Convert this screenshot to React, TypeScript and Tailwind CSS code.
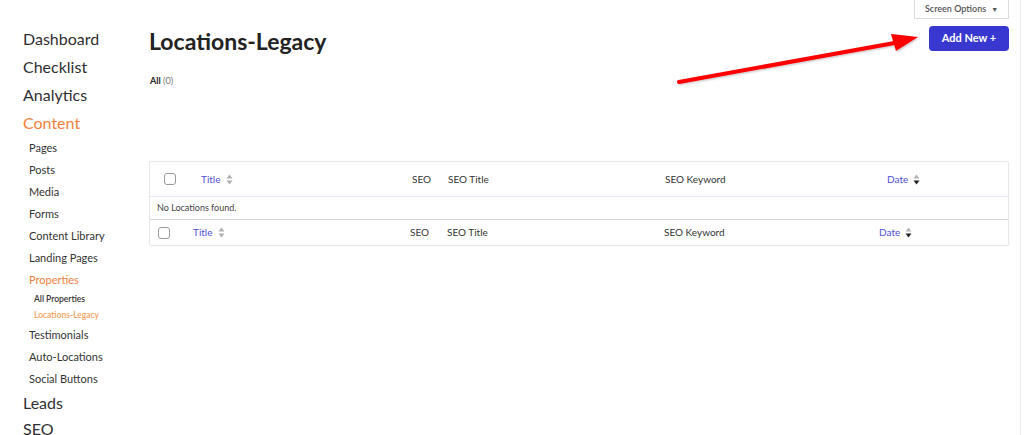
import React from 'react';

const font = { fontFamily: 'Lato, "Open Sans", sans-serif' };

const SortIcon = ({ active }: { active?: boolean }) => (
    <svg width="7" height="11" viewBox="0 0 7 11" className="ml-[5px]">
        <polygon points="3.5,0.5 6.5,4.5 0.5,4.5" fill={active ? '#b5b5b5' : '#b0b0b0'} />
        <polygon points="0.5,6.5 6.5,6.5 3.5,10.5" fill={active ? '#222' : '#b0b0b0'} />
    </svg>
);

const Checkbox = () => <div className="w-[12px] h-[12px] rounded-[3px] border border-[#9a9a9a] bg-white" />;

const HeaderRow = ({ foot }: { foot?: boolean }) => (
    <div className={`flex items-center text-[10px] text-[#333] ${foot ? 'h-[25px] pl-[8px]' : 'h-[35px] pl-[14px] border-b border-[#e6eaf2]'}`}>
        <div className={foot ? 'w-[35px]' : 'w-[37px]'}><Checkbox /></div>
        <div className={`flex items-center text-[#4f4fd8] ${foot ? 'w-[217px]' : 'w-[211px]'}`}>Title <SortIcon /></div>
        <div className={foot ? 'w-[37px]' : 'w-[36px]'}>SEO</div>
        <div className="w-[217px]">SEO Title</div>
        <div className={foot ? 'w-[215px]' : 'w-[222px]'}>SEO Keyword</div>
        <div className="flex items-center text-[#4f4fd8]">Date <SortIcon active /></div>
    </div>
);

const App: React.FC = () => {
    return (
        <div className="relative w-[1024px] h-[435px] overflow-hidden bg-white flex" style={font}>
            {/* Sidebar */}
            <div className="w-[149px] shrink-0 pl-[23px] pt-[25px] text-[#2f2f33]">
                <div className="flex flex-col">
                    <div className="text-[16px] leading-[28px]">Dashboard</div>
                    <div className="text-[16px] leading-[28px]">Checklist</div>
                    <div className="text-[16px] leading-[28px]">Analytics</div>
                    <div className="text-[16px] leading-[28px] text-[#f0803c]">Content</div>
                </div>
                <div className="flex flex-col pl-[6px] text-[11px] text-[#333]">
                    <div className="leading-[22px]">Pages</div>
                    <div className="leading-[22px]">Posts</div>
                    <div className="leading-[22px]">Media</div>
                    <div className="leading-[22px]">Forms</div>
                    <div className="leading-[22px]">Content Library</div>
                    <div className="leading-[22px]">Landing Pages</div>
                    <div className="leading-[22px] text-[#f0803c]">Properties</div>
                    <div className="flex flex-col pl-[5px] text-[8.5px] font-semibold">
                        <div className="leading-[16px] text-[#333]">All Properties</div>
                        <div className="leading-[16px] text-[#f5a261]">Locations-Legacy</div>
                    </div>
                    <div className="leading-[22px] mt-px">Testimonials</div>
                    <div className="leading-[22px]">Auto-Locations</div>
                    <div className="leading-[22px]">Social Buttons</div>
                </div>
                <div className="flex flex-col">
                    <div className="text-[16px] leading-[26px]">Leads</div>
                    <div className="text-[16px] leading-[26px]">SEO</div>
                </div>
            </div>

            {/* Main */}
            <div className="w-[872px] shrink-0 border-r border-[#ececec] pr-[11px] flex flex-col">
                <div className="flex justify-end h-[20px]">
                    <div className="w-[95px] h-[20px] -mt-px border border-[#dcdcdc] flex items-center justify-center gap-[5px] text-[9px] font-semibold text-[#555]">
                        Screen Options <span className="text-[7px]">▼</span>
                    </div>
                </div>
                <div className="flex justify-between items-start mt-[6px]">
                    <h1 className="text-[23px] leading-[26px] font-bold text-[#222] mt-[2px]">Locations-Legacy</h1>
                    <button className="w-[80px] h-[25px] rounded-[4px] bg-[#3838d0] text-white text-[11px] font-bold">Add New +</button>
                </div>
                <div className="mt-[21px] text-[9px] leading-[12px] pl-px">
                    <span className="font-bold text-[#222]">All</span> <span className="text-[#777]">(0)</span>
                </div>
                <div className="mt-[74px] border border-[#e8e8ec] rounded-[2px] shadow-[0_0_2px_rgba(0,0,0,0.04)]">
                    <HeaderRow />
                    <div className="h-[23px] flex items-center pl-[7px] text-[9px] text-[#444] border-b border-[#d4d4d8]">No Locations found.</div>
                    <HeaderRow foot />
                </div>
            </div>

            {/* Annotation arrow */}
            <svg className="absolute left-0 top-0 pointer-events-none" width="1024" height="435">
                <defs>
                    <filter id="sh" x="-10%" y="-50%" width="120%" height="200%">
                        <feDropShadow dx="1" dy="1" stdDeviation="1" floodColor="#000" floodOpacity="0.25" />
                    </filter>
                </defs>
                <g filter="url(#sh)">
                    <line x1="679" y1="82" x2="900" y2="42" stroke="#f00" strokeWidth="4" strokeLinecap="round" />
                    <polygon points="918,37 891,34 896,51" fill="#f00" />
                </g>
            </svg>
        </div>
    );
};

export default App;
